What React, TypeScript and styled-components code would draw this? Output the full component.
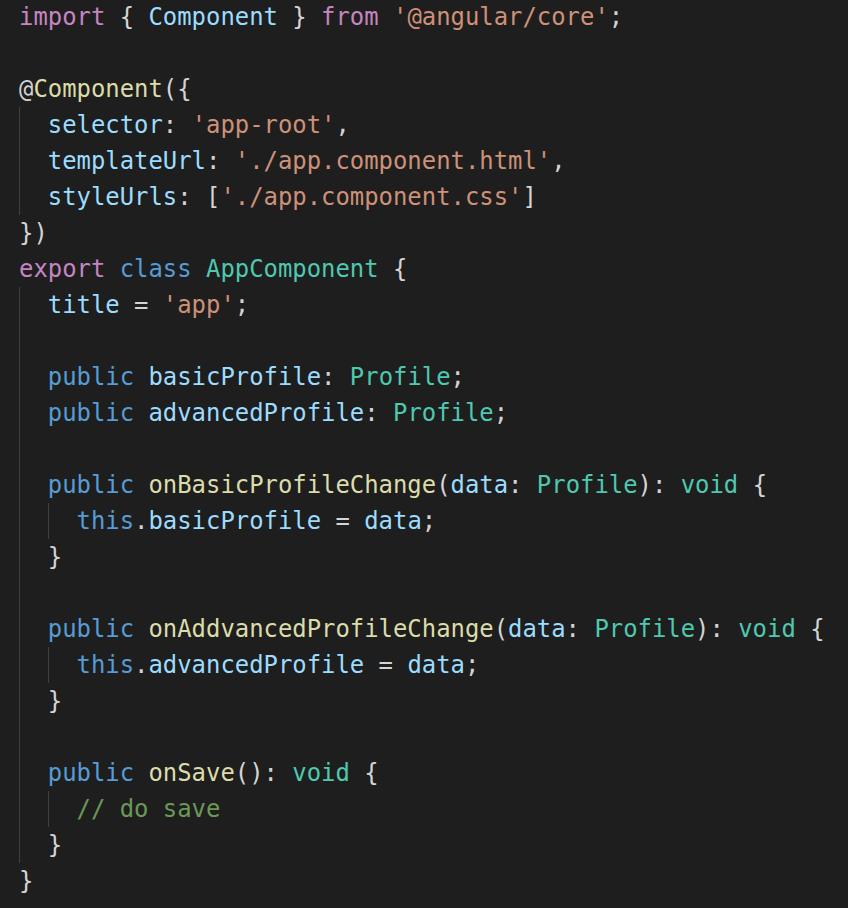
import React from "react";
import styled, { createGlobalStyle } from "styled-components";

const Global = createGlobalStyle`
  html, body { margin: 0; padding: 0; background: #1e1e1e; }
`;

const COLORS = {
  kw: "#c586c0",
  vr: "#9cdcfe",
  st: "#ce9178",
  fn: "#dcdcaa",
  pu: "#d4d4d4",
  sg: "#569cd6",
  ty: "#4ec9b0",
  cm: "#6a9955",
} as const;

type C = keyof typeof COLORS;
type Tok = [string, C];
type LineDef = { indent: number; guides: number; toks: Tok[] };

const Editor = styled.div`
  width: 848px;
  height: 908px;
  box-sizing: border-box;
  background: #1e1e1e;
  padding: 0 0 0 19px;
  margin-top: -1px;
  overflow: hidden;
  font-family: "DejaVu Sans Mono", "Liberation Mono", monospace;
  font-size: 23.9px;
  color: #d4d4d4;
`;

const Row = styled.div`
  display: flex;
  align-items: center;
  height: 36px;
  line-height: 36px;
  white-space: pre;
`;

const Indent = styled.span<{ $guide: boolean }>`
  display: inline-block;
  width: 2ch;
  height: 36px;
  flex: none;
  box-shadow: ${(p) => (p.$guide ? "inset 1px 0 0 #404040" : "none")};
`;

const Token = styled.span<{ $c: C }>`
  color: ${(p) => COLORS[p.$c]};
`;

const L = (indent: number, guides: number, ...toks: Tok[]): LineDef => ({ indent, guides, toks });

const lines: LineDef[] = [
  L(0, 0, ["import", "kw"], [" { ", "pu"], ["Component", "vr"], [" } ", "pu"], ["from", "kw"], [" ", "pu"], ["'@angular/core'", "st"], [";", "pu"]),
  L(0, 0),
  L(0, 0, ["@", "pu"], ["Component", "fn"], ["({", "pu"]),
  L(1, 1, ["selector", "vr"], [": ", "pu"], ["'app-root'", "st"], [",", "pu"]),
  L(1, 1, ["templateUrl", "vr"], [": ", "pu"], ["'./app.component.html'", "st"], [",", "pu"]),
  L(1, 1, ["styleUrls", "vr"], [": [", "pu"], ["'./app.component.css'", "st"], ["]", "pu"]),
  L(0, 0, ["})", "pu"]),
  L(0, 0, ["export", "kw"], [" ", "pu"], ["class", "sg"], [" ", "pu"], ["AppComponent", "ty"], [" {", "pu"]),
  L(1, 1, ["title", "vr"], [" = ", "pu"], ["'app'", "st"], [";", "pu"]),
  L(1, 1),
  L(1, 1, ["public", "sg"], [" ", "pu"], ["basicProfile", "vr"], [": ", "pu"], ["Profile", "ty"], [";", "pu"]),
  L(1, 1, ["public", "sg"], [" ", "pu"], ["advancedProfile", "vr"], [": ", "pu"], ["Profile", "ty"], [";", "pu"]),
  L(1, 1),
  L(1, 1, ["public", "sg"], [" ", "pu"], ["onBasicProfileChange", "fn"], ["(", "pu"], ["data", "vr"], [": ", "pu"], ["Profile", "ty"], ["): ", "pu"], ["void", "ty"], [" {", "pu"]),
  L(2, 2, ["this", "sg"], [".", "pu"], ["basicProfile", "vr"], [" = ", "pu"], ["data", "vr"], [";", "pu"]),
  L(1, 1, ["}", "pu"]),
  L(1, 1),
  L(1, 1, ["public", "sg"], [" ", "pu"], ["onAddvancedProfileChange", "fn"], ["(", "pu"], ["data", "vr"], [": ", "pu"], ["Profile", "ty"], ["): ", "pu"], ["void", "ty"], [" {", "pu"]),
  L(2, 2, ["this", "sg"], [".", "pu"], ["advancedProfile", "vr"], [" = ", "pu"], ["data", "vr"], [";", "pu"]),
  L(1, 1, ["}", "pu"]),
  L(1, 1),
  L(1, 1, ["public", "sg"], [" ", "pu"], ["onSave", "fn"], ["(): ", "pu"], ["void", "ty"], [" {", "pu"]),
  L(2, 2, ["// do save", "cm"]),
  L(1, 1, ["}", "pu"]),
  L(0, 0, ["}", "pu"]),
];

export default function App() {
  return (
    <>
      <Global />
      <Editor>
        {lines.map((ln, i) => (
          <Row key={i}>
            {Array.from({ length: ln.indent }).map((_, j) => (
              <Indent key={j} $guide={j < ln.guides} />
            ))}
            {ln.toks.map(([t, c], k) => (
              <Token key={k} $c={c}>
                {t}
              </Token>
            ))}
          </Row>
        ))}
      </Editor>
    </>
  );
}
